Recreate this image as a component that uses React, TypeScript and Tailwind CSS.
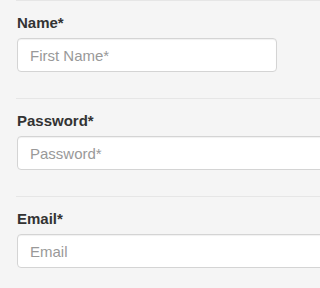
const fields = [
  { label: 'Name*', placeholder: 'First Name*', width: 'w-[260px]' },
  { label: 'Password*', placeholder: 'Password*', width: 'w-[340px]' },
  { label: 'Email*', placeholder: 'Email', width: 'w-[340px]' },
];

export default function App() {
  return (
    <div className="min-h-screen w-full overflow-hidden bg-[#f5f5f5] font-['Liberation_Sans',Arial,sans-serif]">
      {fields.map((f) => (
        <div key={f.label} className="ml-4 border-t border-[#e6e6e6] pt-3 pb-[26px] pl-px">
          <label className="mb-[5px] block h-5 text-[15px] font-bold leading-5 text-[#333]">
            {f.label}
          </label>
          <input
            type="text"
            placeholder={f.placeholder}
            className={`${f.width} h-[34px] rounded-[4px] border border-[#d4d4d4] bg-white px-3 text-[15px] text-[#555] shadow-[inset_0_1px_1px_rgba(0,0,0,0.06)] outline-none placeholder:text-[#999]`}
          />
        </div>
      ))}
    </div>
  );
}
